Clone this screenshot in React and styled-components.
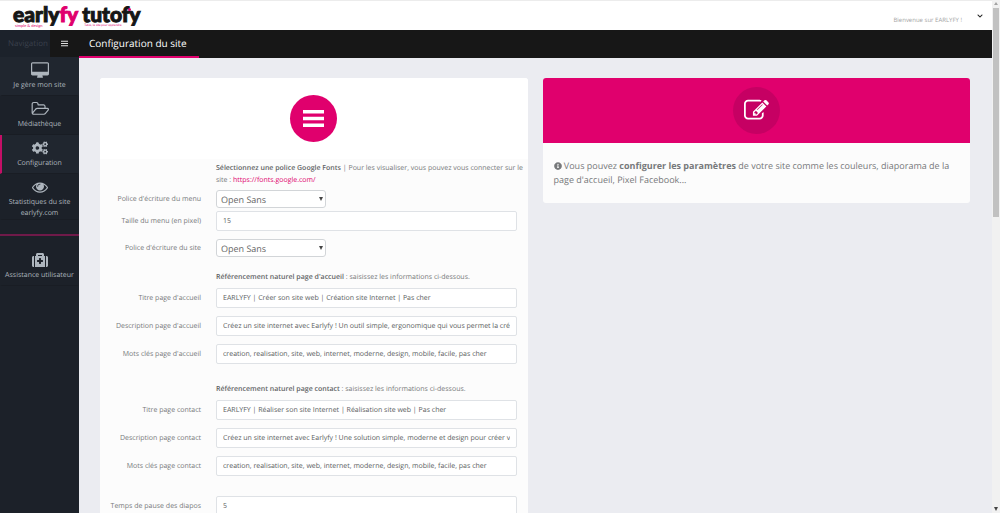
import React from "react"
import styled, { createGlobalStyle } from "styled-components"
import { FaCogs, FaInfoCircle, FaMedkit, FaChevronDown } from "react-icons/fa"

const GlobalStyle = createGlobalStyle`
  * {
    box-sizing: border-box;
  }

  body {
    margin: 0;
    color: #77797b;
    background-color: #ebecf1;
    font-family: "Open Sans", "Noto Sans", sans-serif;
    font-size: 8px;
    text-rendering: geometricPrecision;
  }

  input,
  select,
  button {
    text-rendering: inherit;
  }
`

const Page = styled.div`
  display: grid;
  grid-template-columns: minmax(0, 1fr) 8px;
  height: 100vh;
  overflow: hidden;
`

const Shell = styled.div`
  display: flex;
  flex-direction: column;
  min-height: 0;
`

const TopBar = styled.header`
  display: flex;
  justify-content: space-between;
  flex: none;
  height: 30px;
  padding: 0 9px 0 13px;
  background-color: #fff;
  border-top: 1px solid #ececec;
`

const Logos = styled.div`
  display: flex;
  gap: 4px;
`

const Logo = styled.a`
  display: flex;
  flex-direction: column;
  color: #161616;
  text-decoration: none;
  font-family: Lato, sans-serif;
  font-size: 21px;
  font-weight: 900;
  line-height: 27px;
`

const Wordmark = styled.span`
  position: relative;
  -webkit-text-stroke: 1px currentColor;
`

const Pink = styled.span`
  color: #e0006d;
`

const Dot = styled.i`
  position: absolute;
  top: 7px;
  right: 10px;
  width: 3px;
  height: 3px;
  border-radius: 50%;
  background-color: #e0006d;
`

const Tagline = styled.small`
  margin-top: -5px;
  padding-left: 2px;
  color: #e0006d;
  font-size: ${props => props.$size || "4px"};
  font-weight: 400;
  line-height: 5px;
`

const Account = styled.button`
  display: flex;
  align-items: center;
  gap: 15px;
  padding: 0;
  border: 0;
  background: none;
  color: #a3a3a3;
  font-family: inherit;
  font-size: 6px;

  span {
    padding-top: 8px;
  }

  svg {
    color: #222;
  }
`

const Body = styled.div`
  display: grid;
  grid-template-columns: 79px minmax(0, 1fr);
  flex: 1;
  min-height: 0;
`

const Sidebar = styled.nav`
  background-color: #1c2129;
`

const SidebarHead = styled.div`
  display: flex;
  justify-content: space-between;
  align-items: stretch;
  height: 27px;
  background-color: #1c222b;
  color: #3a404b;
  line-height: 27px;

  span {
    padding-left: 8px;
  }
`

const MenuButton = styled.button`
  display: flex;
  justify-content: center;
  align-items: center;
  width: 29px;
  padding: 0;
  border: 0;
  background-color: #171717;
  color: #ddd;
`

const NavItem = styled.a`
  display: flex;
  flex-direction: column;
  align-items: center;
  gap: 2px;
  min-height: 39px;
  padding: 5px 2px 0;
  border-left: 2px solid ${props => (props.$active ? "#c30f66" : "transparent")};
  border-right: 2px solid transparent;
  border-bottom: 1px solid #191d24;
  background-color: ${props => (props.$lit ? "#20262f" : "transparent")};
  color: #adb5bd;
  text-align: center;
  text-decoration: none;
  font-size: 7px;
  line-height: 11px;

  svg {
    flex: none;
  }
`

const NavGroup = styled.div`
  padding-bottom: 14px;
`

const Separator = styled.hr`
  margin: 0 0 11px;
  border: 0;
  border-top: 2px solid #6f1a49;
`

const Main = styled.main`
  min-width: 0;
  overflow: hidden;
`

const TitleBar = styled.div`
  display: flex;
  height: 28px;
  background-color: #171717;
`

const Title = styled.h1`
  width: 120px;
  margin: 0;
  padding-left: 10px;
  border-bottom: 2px solid #e0006d;
  color: #fff;
  font-size: 10px;
  font-weight: 400;
  line-height: 27px;
  white-space: nowrap;
`

const Columns = styled.div`
  display: grid;
  grid-template-columns: minmax(0, 1fr) minmax(0, 1fr);
  align-items: start;
  gap: 15px;
  padding: 20px 22px 20px 21px;
`

const Card = styled.section`
  overflow: hidden;
  border-radius: 3px;
  background-color: #fcfcfc;
`

const CardHead = styled.div`
  display: flex;
  justify-content: center;
  align-items: center;
  height: ${props => props.$height};
  background-color: ${props => props.$color};
`

const Round = styled.div`
  display: flex;
  justify-content: center;
  align-items: center;
  width: 47px;
  height: 47px;
  border-radius: 50%;
  background-color: ${props => props.$color};
  color: #fff;
`

const Notice = styled.p`
  margin: 0;
  padding: 16px 11px;
  min-height: 59px;
  font-size: 9px;
  line-height: 14px;

  svg {
    vertical-align: -1px;
  }
`

const Form = styled.form`
  display: flex;
  flex-direction: column;
  padding: 4px 11px 20px 0;
`

const Row = styled.div`
  display: grid;
  grid-template-columns: 101px minmax(0, 1fr);
  align-items: center;
  column-gap: 15px;
  margin-bottom: ${props => props.$space || "8px"};
`

const Label = styled.label`
  text-align: right;
  font-size: 7px;
`

const Hint = styled.p`
  grid-column: 2;
  margin: 0 -10px 0 0;
  font-size: 7px;
  line-height: 12px;

  b {
    font-weight: 600;
    color: #616365;
  }

  a {
    color: #e0006d;
    text-decoration: none;
  }
`

const Input = styled.input`
  width: 100%;
  height: 20px;
  padding: 0 6px;
  border: 1px solid #dfe2e6;
  border-radius: 2px;
  background-color: #fff;
  color: #5a5d60;
  font-family: inherit;
  font-size: 7px;
`

const SelectBox = styled.div`
  display: grid;
  align-items: center;
  width: 110px;

  select,
  svg {
    grid-area: 1 / 1;
  }

  svg {
    justify-self: end;
    margin-right: 3px;
    pointer-events: none;
  }
`

const Select = styled.select`
  appearance: none;
  width: 100%;
  height: 18px;
  padding: 0 4px;
  border: 1px solid #d2d5d8;
  border-radius: 3px;
  background-color: #fff;
  color: #666;
  font-family: inherit;
  font-size: 9px;
`

const ScrollTrack = styled.div`
  display: flex;
  flex-direction: column;
  align-items: center;
  padding: 2px 0;
  background-color: #f1f1f1;
`

const ScrollThumb = styled.div`
  flex: 0 0 41%;
  width: 6px;
  margin: 2px 0 auto;
  background-color: #c1c1c1;
`

const DesktopIcon = () => (
  <svg width="18" height="16" viewBox="0 0 1920 1664" fill="currentColor">
    <path d="M1792 992v-832q0-13-9.5-22.5t-22.5-9.5h-1600q-13 0-22.5 9.5t-9.5 22.5v832q0 13 9.5 22.5t22.5 9.5h1600q13 0 22.5-9.5t9.5-22.5zm128-832v1088q0 66-47 113t-113 47h-544q0 37 16 77.5t32 71 16 43.5q0 26-19 45t-45 19h-512q-26 0-45-19t-19-45q0-14 16-44t32-70 16-78h-544q-66 0-113-47t-47-113v-1088q0-66 47-113t113-47h1600q66 0 113 47t47 113z" />
  </svg>
)

const FolderIcon = () => (
  <svg width="18" height="16" viewBox="0 100 1973 1600" fill="currentColor">
    <path d="M1845 931q0-35-53-35h-1088q-40 0-85.5 21.5t-71.5 52.5l-294 363q-18 24-18 40 0 35 53 35h1088q40 0 86-22t71-53l294-363q18-22 18-39zm-1141-163h768v-160q0-40-28-68t-68-28h-576q-40 0-68-28t-28-68v-64q0-40-28-68t-68-28h-320q-40 0-68 28t-28 68v853l256-315q44-53 116-87.5t140-34.5zm1269 163q0 62-46 120l-295 363q-43 53-116 87.5t-140 34.5h-1088q-92 0-158-66t-66-158v-960q0-92 66-158t158-66h320q92 0 158 66t66 158v32h544q92 0 158 66t66 158v160h192q54 0 99 24.5t67 70.5q15 32 15 68z" />
  </svg>
)

const EyeIcon = () => (
  <svg width="16" height="16" viewBox="0 0 1792 1792" fill="currentColor">
    <path d="M1664 960q-152-236-381-353 61 104 61 225 0 185-131.5 316.5t-316.5 131.5-316.5-131.5-131.5-316.5q0-121 61-225-229 117-381 353 133 205 333.5 326.5t434.5 121.5 434.5-121.5 333.5-326.5zm-720-384q0-20-14-34t-34-14q-125 0-214.5 89.5t-89.5 214.5q0 20 14 34t34 14 34-14 14-34q0-86 61-147t147-61q20 0 34-14t14-34zm848 384q0 34-20 69-140 230-376.5 368.5t-499.5 138.5-499.5-139-376.5-368q-20-35-20-69t20-69q140-229 376.5-368t499.5-139 499.5 139 376.5 368q20 35 20 69z" />
  </svg>
)

const EditIcon = () => (
  <svg width="25" height="25" viewBox="0 0 1792 1792" fill="currentColor">
    <path d="M888 1184l116-116-152-152-116 116v56h96v96h56zm440-720q-16-16-33 1l-350 350q-17 17-1 33t33-1l350-350q17-17 1-33zm80 594v190q0 119-84.5 203.5t-203.5 84.5h-832q-119 0-203.5-84.5t-84.5-203.5v-832q0-119 84.5-203.5t203.5-84.5h832q63 0 117 25 15 7 18 23 3 17-9 29l-49 49q-14 14-32 8-23-6-45-6h-832q-66 0-113 47t-47 113v832q0 66 47 113t113 47h832q66 0 113-47t47-113v-126q0-13 9-22l64-64q15-15 35-7t20 29zm-96-738l288 288-672 672h-288v-288zm444 132l-92 92-288-288 92-92q28-28 68-28t68 28l152 152q28 28 28 68t-28 68z" />
  </svg>
)

const BarsIcon = ({ size }) => (
  <svg width={size} height={size} viewBox="0 0 21 21" fill="currentColor">
    <path d="M0 2h21v3.6H0zM0 8.7h21v3.6H0zM0 15.4h21v3.6H0z" />
  </svg>
)

const Triangle = ({ up }) => (
  <svg width="4" height="4" viewBox="0 0 4 4" fill={up ? "#a3a3a3" : "#444"}>
    <path d={up ? "M0 3l2-3 2 3z" : "M0 0h4l-2 4z"} />
  </svg>
)

const TextRow = ({ id, label, value, space }) => (
  <Row $space={space}>
    <Label htmlFor={id}>{label}</Label>
    <Input id={id} type="text" defaultValue={value} />
  </Row>
)

const FontRow = ({ id, label, space }) => (
  <Row $space={space}>
    <Label htmlFor={id}>{label}</Label>
    <SelectBox>
      <Select id={id} defaultValue="Open Sans">
        <option>Open Sans</option>
        <option>Lato</option>
        <option>Roboto</option>
      </Select>
      <Triangle />
    </SelectBox>
  </Row>
)

const App = () => (
  <Page>
    <GlobalStyle />
    <Shell>
      <TopBar>
        <Logos>
          <Logo href="#earlyfy">
            <Wordmark>
              early<Pink>fy</Pink>
            </Wordmark>
            <Tagline>simple &amp; design</Tagline>
          </Logo>
          <Logo href="#tutofy">
            <Wordmark>
              tutofy
              <Dot />
            </Wordmark>
            <Tagline $size="3px">Tutos, le site pour apprendre</Tagline>
          </Logo>
        </Logos>
        <Account type="button">
          <span>Bienvenue sur EARLYFY !</span>
          <FaChevronDown size={6} />
        </Account>
      </TopBar>
      <Body>
        <Sidebar>
          <SidebarHead>
            <span>Navigation</span>
            <MenuButton type="button" aria-label="Menu">
              <BarsIcon size={7} />
            </MenuButton>
          </SidebarHead>
          <NavGroup>
            <NavItem href="#site" $lit>
              <DesktopIcon />
              Je gère mon site
            </NavItem>
            <NavItem href="#media">
              <FolderIcon />
              Médiathèque
            </NavItem>
            <NavItem href="#configuration" $active $lit>
              <FaCogs size={16} />
              Configuration
            </NavItem>
            <NavItem href="#stats">
              <EyeIcon />
              Statistiques du site earlyfy.com
            </NavItem>
          </NavGroup>
          <Separator />
          <NavItem href="#assistance">
            <FaMedkit size={16} />
            Assistance utilisateur
          </NavItem>
        </Sidebar>
        <Main>
          <TitleBar>
            <Title>Configuration du site</Title>
          </TitleBar>
          <Columns>
            <Card>
              <CardHead $height="81px" $color="#fff">
                <Round $color="#e0006d">
                  <BarsIcon size={21} />
                </Round>
              </CardHead>
              <Form>
                <Row $space="3px">
                  <Hint>
                    <b>Sélectionnez une police Google Fonts</b> | Pour les
                    visualiser, vous pouvez vous connecter sur le site :{" "}
                    <a href="https://fonts.google.com/">
                      https://fonts.google.com/
                    </a>
                  </Hint>
                </Row>
                <FontRow
                  id="menu-font"
                  label="Police d'écriture du menu"
                  space="3px"
                />
                <TextRow
                  id="menu-size"
                  label="Taille du menu (en pixel)"
                  value="15"
                />
                <FontRow
                  id="site-font"
                  label="Police d'écriture du site"
                  space="15px"
                />
                <Row $space="4px">
                  <Hint>
                    <b>Référencement naturel page d'accueil</b> : saisissez les
                    informations ci-dessous.
                  </Hint>
                </Row>
                <TextRow
                  id="home-title"
                  label="Titre page d'accueil"
                  value="EARLYFY | Créer son site web | Création site Internet | Pas cher"
                />
                <TextRow
                  id="home-description"
                  label="Description page d'accueil"
                  value="Créez un site internet avec Earlyfy ! Un outil simple, ergonomique qui vous permet la création de votre site"
                />
                <TextRow
                  id="home-keywords"
                  label="Mots clés page d'accueil"
                  value="creation, realisation, site, web, internet, moderne, design, mobile, facile, pas cher"
                  space="20px"
                />
                <Row $space="4px">
                  <Hint>
                    <b>Référencement naturel page contact</b> : saisissez les
                    informations ci-dessous.
                  </Hint>
                </Row>
                <TextRow
                  id="contact-title"
                  label="Titre page contact"
                  value="EARLYFY | Réaliser son site Internet | Réalisation site web | Pas cher"
                />
                <TextRow
                  id="contact-description"
                  label="Description page contact"
                  value="Créez un site internet avec Earlyfy ! Une solution simple, moderne et design pour créer votre site"
                />
                <TextRow
                  id="contact-keywords"
                  label="Mots clés page contact"
                  value="creation, realisation, site, web, internet, moderne, design, mobile, facile, pas cher"
                  space="20px"
                />
                <TextRow
                  id="slide-pause"
                  label="Temps de pause des diapos"
                  value="5"
                />
              </Form>
            </Card>
            <Card>
              <CardHead $height="65px" $color="#e0006d">
                <Round $color="#c60063">
                  <EditIcon />
                </Round>
              </CardHead>
              <Notice>
                <FaInfoCircle size={8} /> Vous pouvez{" "}
                <b>configurer les paramètres</b> de votre site comme les
                couleurs, diaporama de la page d'accueil, Pixel Facebook...
              </Notice>
            </Card>
          </Columns>
        </Main>
      </Body>
    </Shell>
    <ScrollTrack>
      <Triangle up />
      <ScrollThumb />
      <Triangle />
    </ScrollTrack>
  </Page>
)

export default App
